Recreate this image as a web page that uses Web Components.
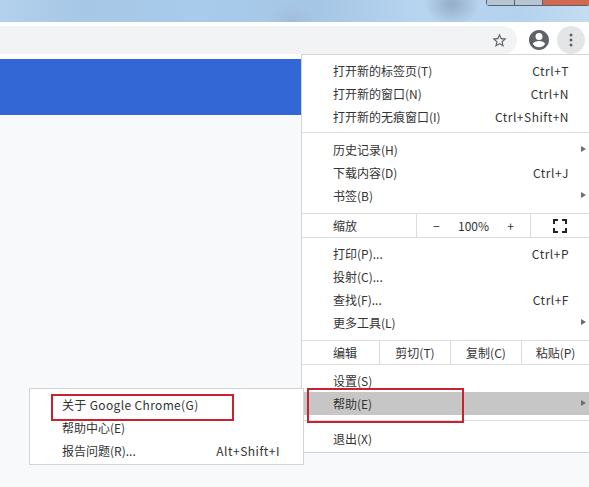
<!DOCTYPE html>
<html lang="zh">
<head>
<meta charset="utf-8">
<title>Chrome menu</title>
<style>
	html, body { margin: 0; padding: 0; width: 589px; height: 487px; overflow: hidden; background: #f8f9fa; }
	body { font-family: "Noto Sans CJK SC", sans-serif; color: #333; position: relative; }
</style>
</head>
<body>
<browser-chrome></browser-chrome>
<page-area></page-area>
<chrome-menu></chrome-menu>
<help-submenu></help-submenu>
<red-box style="left:307px;top:388px;width:157px;height:35px"></red-box>
<red-box style="left:51px;top:394px;width:183px;height:27px"></red-box>

<script>
const FONT = `"Noto Sans CJK SC", "Noto Sans", sans-serif`;

class BrowserChrome extends HTMLElement {
	constructor() {
		super();
		this.attachShadow({ mode: "open" }).innerHTML = this.render();
	}
	render() {
		return `
			<style>
				:host { display: block; height: 59px; background: #fff; }
				.desktop {
					height: 22px; position: relative; overflow: hidden;
					background:
						radial-gradient(ellipse 28px 22px at 452px 4px, rgba(120,140,165,.55), transparent),
						radial-gradient(ellipse 24px 18px at 292px 22px, rgba(150,160,190,.3), transparent),
						linear-gradient(90deg, #b3d1ec 0, #a6c7e6 80px, #a9cbeb 200px, #a5c6e5 320px, #b8d5f0 420px, #b4d2ee 520px, #c4dcf0 589px);
				}
				.winbtns { position: absolute; right: -1px; top: -1px; display: flex; height: 5px; border: 1px solid #56626e; border-radius: 0 0 3px 3px; }
				.winbtns span { display: block; width: 27px; background: #b7c5d2; border-right: 1px solid #56626e; }
				.winbtns span:last-child { width: 46px; background: #d4674f; border-right: 0; }
				.bar { height: 28px; margin-top: 4px; display: flex; align-items: center; }
				.omni { width: 517px; height: 28px; background: #f1f3f4; border-radius: 0 14px 14px 0; display: flex; justify-content: flex-end; align-items: center; padding-right: 9px; box-sizing: border-box; }
				.omni svg { display: block; }
				.account { margin-left: 10px; display: block; }
				.more { margin-left: 6px; width: 28px; height: 28px; border-radius: 50%; background: #e4e5e6; display: flex; align-items: center; justify-content: center; }
			</style>
			<div class="desktop"><div class="winbtns"><span></span><span></span><span></span></div></div>
			<div class="bar">
				<div class="omni">
					<svg width="17" height="17" viewBox="0 0 24 24"><path fill="#5f6368" d="M22 9.24l-7.19-.62L12 2 9.19 8.63 2 9.24l5.46 4.73L5.82 21 12 17.27 18.18 21l-1.63-7.03L22 9.24zM12 15.4l-3.76 2.27 1-4.28-3.32-2.88 4.38-.38L12 6.1l1.71 4.04 4.38.38-3.32 2.88 1 4.28L12 15.4z"/></svg>
				</div>
				<svg class="account" width="24" height="24" viewBox="0 0 24 24"><path fill="#5f6368" d="M12 2C6.48 2 2 6.48 2 12s4.48 10 10 10 10-4.48 10-10S17.52 2 12 2zm0 3a3.5 3.5 0 1 1 0 7 3.5 3.5 0 0 1 0-7zm0 14.2a7.2 7.2 0 0 1-6-3.22c.03-2 4-3.08 6-3.08s5.97 1.09 6 3.08a7.2 7.2 0 0 1-6 3.22z"/></svg>
				<div class="more">
					<svg width="4" height="14" viewBox="0 0 4 14"><circle cx="2" cy="2" r="1.5" fill="#5f6368"/><circle cx="2" cy="7" r="1.5" fill="#5f6368"/><circle cx="2" cy="12" r="1.5" fill="#5f6368"/></svg>
				</div>
			</div>`;
	}
}

class PageArea extends HTMLElement {
	constructor() {
		super();
		this.attachShadow({ mode: "open" }).innerHTML = `
			<style>
				:host { display: block; }
				.band { height: 56px; background: #3367d6; }
			</style>
			<div class="band"></div>`;
	}
}

// one row of a menu: label, optional shortcut, optional arrow
class MenuItem extends HTMLElement {
	connectedCallback() {
		const accel = this.getAttribute("accel") || "";
		const arrow = this.hasAttribute("arrow") ? `<span class="arrow"></span>` : "";
		this.attachShadow({ mode: "open" }).innerHTML = `
			<style>
				:host { display: flex; height: 23px; align-items: center; padding: 0 20px 0 31px; font: 12px/1 ${FONT}; color: #333; position: relative; white-space: nowrap; }
				:host([active]) { background: #c6c6c6; }
				:host([wide]) .label { letter-spacing: .35px; }
				.label { flex: 1; }
				.accel { letter-spacing: .5px; }
				.arrow { position: absolute; right: 3px; top: 8px; border-left: 5px solid #6e6e6e; border-top: 3.5px solid transparent; border-bottom: 3.5px solid transparent; }
			</style>
			<span class="label">${this.getAttribute("label")}</span>
			<span class="accel">${accel}</span>${arrow}`;
	}
}

class MenuSep extends HTMLElement {
	constructor() {
		super();
		this.attachShadow({ mode: "open" }).innerHTML = `<style>:host { display: block; height: 1px; background: #dcdcdc; }</style>`;
	}
}

// zoom row and edit row, cells split with thin lines
class ZoomRow extends HTMLElement {
	constructor() {
		super();
		this.attachShadow({ mode: "open" }).innerHTML = `
			<style>
				:host { display: grid; grid-template-columns: 114px 115px 1fr; height: 23px; font: 12px/1 ${FONT}; color: #333; border-top: 1px solid #dcdcdc; border-bottom: 1px solid #dcdcdc; }
				div { display: flex; align-items: center; box-sizing: border-box; }
				.name { padding-left: 31px; }
				.ctl { border-left: 1px solid #dcdcdc; border-right: 1px solid #dcdcdc; justify-content: space-between; padding: 0 16px; }
				.full { justify-content: center; }
			</style>
			<div class="name">缩放</div>
			<div class="ctl"><span>−</span><span>100%</span><span>+</span></div>
			<div class="full">
				<svg width="14" height="14" viewBox="0 0 14 14"><path fill="none" stroke="#222" stroke-width="2" d="M1 5V1h4M9 1h4v4M13 9v4H9M5 13H1V9"/></svg>
			</div>`;
	}
}

class EditRow extends HTMLElement {
	constructor() {
		super();
		this.attachShadow({ mode: "open" }).innerHTML = `
			<style>
				:host { display: grid; grid-template-columns: 77px 71px 71px 1fr; height: 23px; font: 12px/1 ${FONT}; color: #333; border-top: 1px solid #dcdcdc; border-bottom: 1px solid #dcdcdc; }
				div { display: flex; align-items: center; justify-content: center; box-sizing: border-box; border-left: 1px solid #dcdcdc; }
				.name { border-left: 0; justify-content: flex-start; padding-left: 31px; }
			</style>
			<div class="name">编辑</div><div>剪切(T)</div><div>复制(C)</div><div>粘贴(P)</div>`;
	}
}

class ChromeMenu extends HTMLElement {
	constructor() {
		super();
		this.attachShadow({ mode: "open" }).innerHTML = `
			<style>
				:host { display: block; position: absolute; left: 301px; top: 54px; width: 288px; height: 399px; box-sizing: border-box; background: #fff; border: 1px solid #d4d4d4; border-right: 0; padding-top: 4px; }
				.first { padding-bottom: 4px; }
				.hist { padding: 5px 0 6px; }
				.tools { padding: 4px 0 6px; }
				.help { padding: 4px 0 5px; }
				.exit { padding-top: 6px; }
			</style>
			<div class="first">
				<menu-item label="打开新的标签页(T)" accel="Ctrl+T"></menu-item>
				<menu-item label="打开新的窗口(N)" accel="Ctrl+N"></menu-item>
				<menu-item label="打开新的无痕窗口(I)" accel="Ctrl+Shift+N"></menu-item>
			</div>
			<menu-sep></menu-sep>
			<div class="hist">
				<menu-item label="历史记录(H)" arrow></menu-item>
				<menu-item label="下载内容(D)" accel="Ctrl+J"></menu-item>
				<menu-item label="书签(B)" arrow></menu-item>
			</div>
			<zoom-row></zoom-row>
			<div class="tools">
				<menu-item label="打印(P)..." accel="Ctrl+P"></menu-item>
				<menu-item label="投射(C)..."></menu-item>
				<menu-item label="查找(F)..." accel="Ctrl+F"></menu-item>
				<menu-item label="更多工具(L)" arrow></menu-item>
			</div>
			<edit-row></edit-row>
			<div class="help">
				<menu-item label="设置(S)"></menu-item>
				<menu-item label="帮助(E)" arrow active></menu-item>
			</div>
			<menu-sep></menu-sep>
			<div class="exit">
				<menu-item label="退出(X)"></menu-item>
			</div>`;
	}
}

class HelpSubmenu extends HTMLElement {
	constructor() {
		super();
		this.attachShadow({ mode: "open" }).innerHTML = `
			<style>
				:host { display: block; position: absolute; left: 29px; top: 388px; width: 275px; height: 77px; box-sizing: border-box; background: #fff; border: 1px solid #d4d4d4; padding-top: 4px; }
				menu-item { padding-left: 32px; padding-right: 23px; }
			</style>
			<menu-item label="关于 Google Chrome(G)" wide></menu-item>
			<menu-item label="帮助中心(E)"></menu-item>
			<menu-item label="报告问题(R)..." accel="Alt+Shift+I"></menu-item>`;
	}
}

class RedBox extends HTMLElement {
	constructor() {
		super();
		this.attachShadow({ mode: "open" }).innerHTML = `<style>:host { display: block; position: absolute; box-sizing: border-box; border: 2px solid #c8232c; }</style>`;
	}
}

customElements.define("browser-chrome", BrowserChrome);
customElements.define("page-area", PageArea);
customElements.define("menu-item", MenuItem);
customElements.define("menu-sep", MenuSep);
customElements.define("zoom-row", ZoomRow);
customElements.define("edit-row", EditRow);
customElements.define("chrome-menu", ChromeMenu);
customElements.define("help-submenu", HelpSubmenu);
customElements.define("red-box", RedBox);
</script>
</body>
</html>
